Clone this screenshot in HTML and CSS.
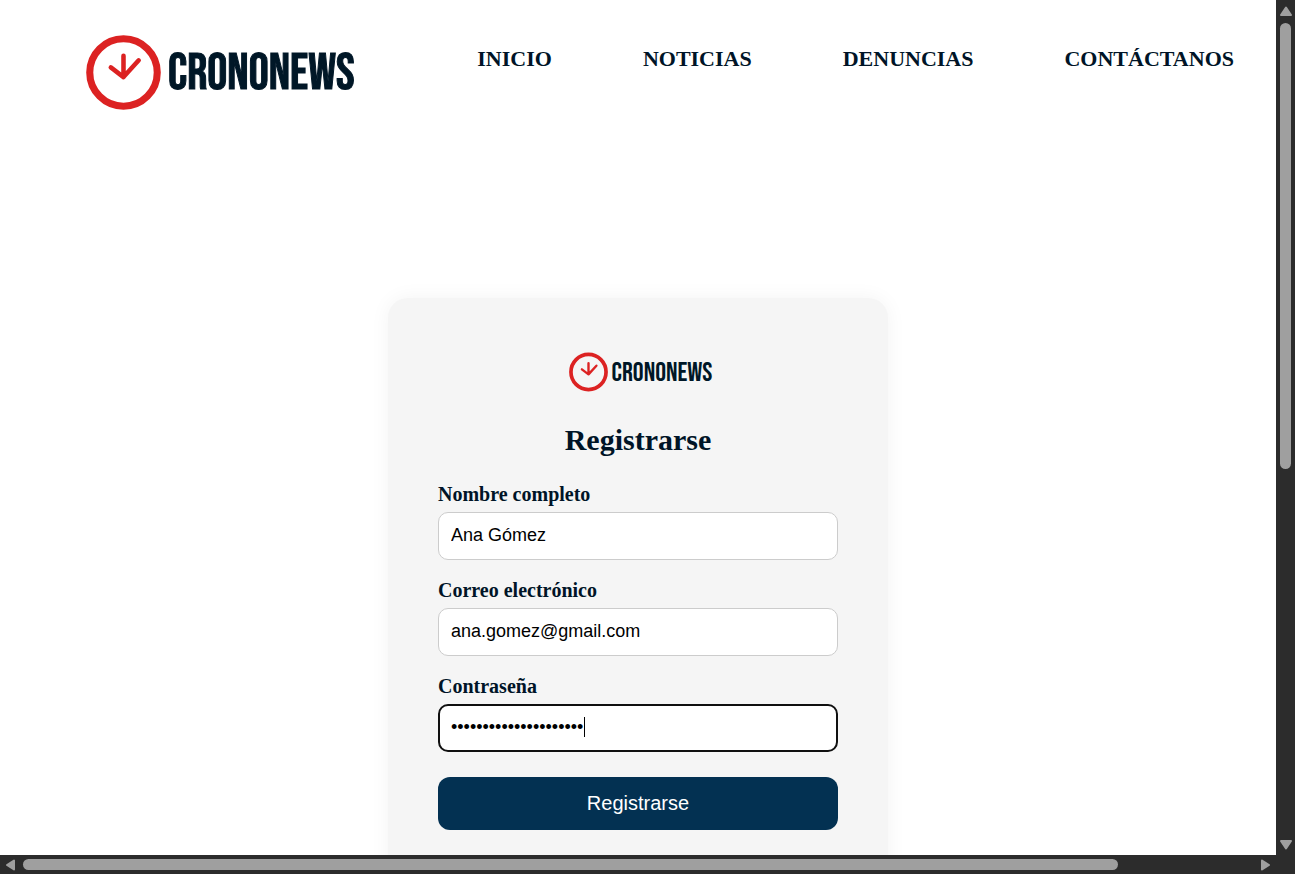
FILE: index.html
```html
<!DOCTYPE html>
<html lang="es">
<head>
<meta charset="utf-8">
<meta name="viewport" content="width=device-width, initial-scale=1">
<title>CronoNews - Registrarse</title>
<link rel="stylesheet" href="styles.css">
</head>
<body>
<div class="shell">
  <div class="page">
    <header class="header">
      <a class="logo" href="#">
        <svg class="logo-icon" viewBox="0 0 74 74" aria-hidden="true">
          <circle cx="37" cy="37" r="33.3"/>
          <path d="M37 20.500V41.500M24.500 32l12.500 9.500L52 25"/>
        </svg>
        <span class="logo-text">CRONONEWS</span>
      </a>
      <nav class="nav">
        <a href="#">INICIO</a>
        <a href="#">NOTICIAS</a>
        <a href="#">DENUNCIAS</a>
        <a href="#">CONTÁCTANOS</a>
      </nav>
    </header>
    <main class="main">
      <form class="card">
        <div class="logo logo-small">
          <svg class="logo-icon" viewBox="0 0 74 74" aria-hidden="true">
            <circle cx="37" cy="37" r="33.3"/>
            <path d="M37 20.500V41.500M24.500 32l12.500 9.500L52 25"/>
          </svg>
          <span class="logo-text">CRONONEWS</span>
        </div>
        <h1 class="title">Registrarse</h1>
        <label class="label" for="nombre">Nombre completo</label>
        <input class="input" id="nombre" type="text" value="Ana Gómez">
        <label class="label" for="correo">Correo electrónico</label>
        <input class="input" id="correo" type="email" value="ana.gomez@gmail.com">
        <label class="label" for="clave">Contraseña</label>
        <div class="field">
          <input class="input input-active" id="clave" type="password" value="abcdefghijklmnopqrstu">
          <span class="caret" aria-hidden="true"></span>
        </div>
        <button class="submit" type="submit">Registrarse</button>
      </form>
    </main>
  </div>
  <div class="bar bar-y" aria-hidden="true">
    <svg class="arrow" viewBox="0 0 14 12"><path d="M7 2.500 12 10H2z"/></svg>
    <div class="track"><div class="thumb"></div></div>
    <svg class="arrow" viewBox="0 0 14 12"><path d="M2 2H12L7 9.500z"/></svg>
  </div>
  <div class="bar bar-x" aria-hidden="true">
    <svg class="arrow" viewBox="0 0 14 14"><path d="M10 2.500V11.500L3 7z"/></svg>
    <div class="track"><div class="thumb"></div></div>
    <svg class="arrow" viewBox="0 0 14 14"><path d="M4 2.500 11 7 4 11.500z"/></svg>
  </div>
</div>
</body>
</html>
```

FILE: styles.css
```css
* { box-sizing: border-box; }

body {
  margin: 0;
  background: #fff;
  color: #001427;
  font-family: "Liberation Serif", "Times New Roman", serif;
}

.shell {
  display: grid;
  grid-template: minmax(0, 1fr) 19px / minmax(0, 1fr) 19px;
  height: 100vh;
  background: #2c2c2c;
}

.page { overflow: hidden; background: #fff; }

.header {
  display: flex;
  align-items: flex-start;
  justify-content: space-between;
  padding: 35px 42px 0 86px;
}

.logo {
  display: flex;
  align-items: center;
  gap: 7px;
  color: #001727;
  text-decoration: none;
}
.logo-icon {
  width: 75px;
  height: 75px;
  fill: none;
  stroke: #dc2222;
  stroke-width: 7;
}
.logo-icon path { stroke-width: 4.5; stroke-linecap: round; stroke-linejoin: round; }
.logo-text {
  padding-top: 3px;
  font: 50px/1 "Bebas Neue", "Roboto", sans-serif;
  -webkit-text-stroke: 1px currentColor;
}

.nav { display: flex; gap: 91px; padding-top: 11px; }
.nav a {
  color: #001427;
  font-size: 22px;
  line-height: 26px;
  font-weight: bold;
  text-decoration: none;
}

.main { display: flex; justify-content: center; padding-top: 188px; }

.card {
  display: flex;
  flex-direction: column;
  width: 500px;
  padding: 54px 50px;
  border-radius: 20px;
  background: #f5f5f5;
  box-shadow: 0 0 20px rgba(0, 0, 0, 0.05);
}

.logo-small { align-self: center; gap: 4px; padding-left: 5px; }
.logo-small .logo-icon { width: 39px; height: 40px; }
.logo-small .logo-text { font-size: 27px; -webkit-text-stroke: 0; }

.title { margin: 31px 0 26px; font-size: 30px; line-height: 34px; text-align: center; }

.label { margin-bottom: 7px; font-size: 20px; line-height: 22px; font-weight: bold; }

.input {
  display: block;
  width: 100%;
  height: 48px;
  margin-bottom: 19px;
  padding: 0 12px 2px;
  border: 1px solid #ccc;
  border-radius: 10px;
  outline: none;
  background: #fff;
  color: #000;
  font: 18px "Liberation Sans", Arial, sans-serif;
}
.input-active { padding: 0 11px 2px; border: 2px solid #101010; }

.field { position: relative; }
.caret {
  position: absolute;
  top: 13px;
  left: 146px;
  width: 1px;
  height: 20px;
  background: #000;
}

.submit {
  margin-top: 6px;
  height: 53px;
  border: 0;
  border-radius: 12px;
  background: #033152;
  color: #fff;
  font: 20px "Liberation Sans", Arial, sans-serif;
}

.bar { display: flex; align-items: center; }
.bar-y { flex-direction: column; padding: 5px 0 4px; }
.bar-x { padding: 0 4px; }
.arrow {
  flex: none;
  width: 14px;
  fill: #9f9f9f;
  stroke: #9f9f9f;
  stroke-width: 2;
  stroke-linejoin: round;
}
.track { display: flex; flex: 1; min-width: 0; min-height: 0; }
.thumb { border-radius: 6px; background: #9f9f9f; }
.bar-y .track { width: 11px; padding: 6px 0; }
.bar-y .thumb { width: 11px; height: 55%; }
.bar-x .track { height: 11px; padding: 0 5px; }
.bar-x .thumb { width: 89%; height: 11px; }
```
